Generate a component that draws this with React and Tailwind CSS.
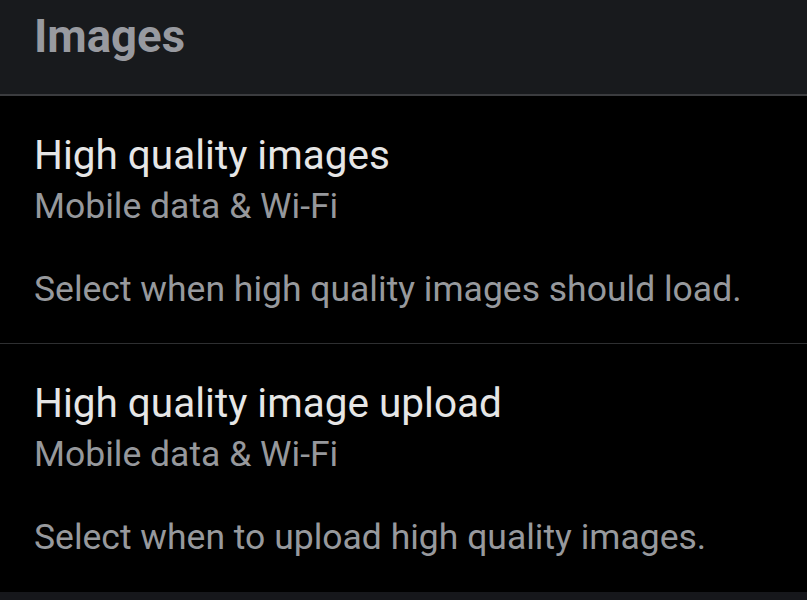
import React from 'react';

const items = [
  {
    title: 'High quality images',
    value: 'Mobile data & Wi-Fi',
    hint: 'Select when high quality images should load.',
  },
  {
    title: 'High quality image upload',
    value: 'Mobile data & Wi-Fi',
    hint: 'Select when to upload high quality images.',
  },
];

function SettingRow({ title, value, hint, last }) {
  return (
    <div
      className={`h-[248px] pt-[35px] pl-[34px] ${last ? '' : 'border-b border-[#2e2f31]'}`}
    >
      <div className="text-[40.5px] leading-[48px] text-[#e6e6e6]">{title}</div>
      <div className="mt-[5px] text-[35.5px] leading-[44px] text-[#96989c]">{value}</div>
      <div className="mt-[39px] text-[35.5px] leading-[44px] text-[#97999d]">{hint}</div>
    </div>
  );
}

export default function App() {
  return (
    <div
      className="w-[807px] h-[600px] overflow-hidden bg-black flex flex-col"
      style={{ fontFamily: 'Roboto, "Noto Sans", sans-serif' }}
    >
      <div className="h-[96px] shrink-0 bg-[#181a1d] border-b-2 border-[#3b3c3f] pt-[9px] pl-[34px]">
        <h1 className="text-[45.5px] leading-[56px] font-bold text-[#989aa0]">Images</h1>
      </div>
      {items.map((item, i) => (
        <SettingRow key={item.title} {...item} last={i === items.length - 1} />
      ))}
      <div className="flex-1 bg-[#16171b]" />
    </div>
  );
}
